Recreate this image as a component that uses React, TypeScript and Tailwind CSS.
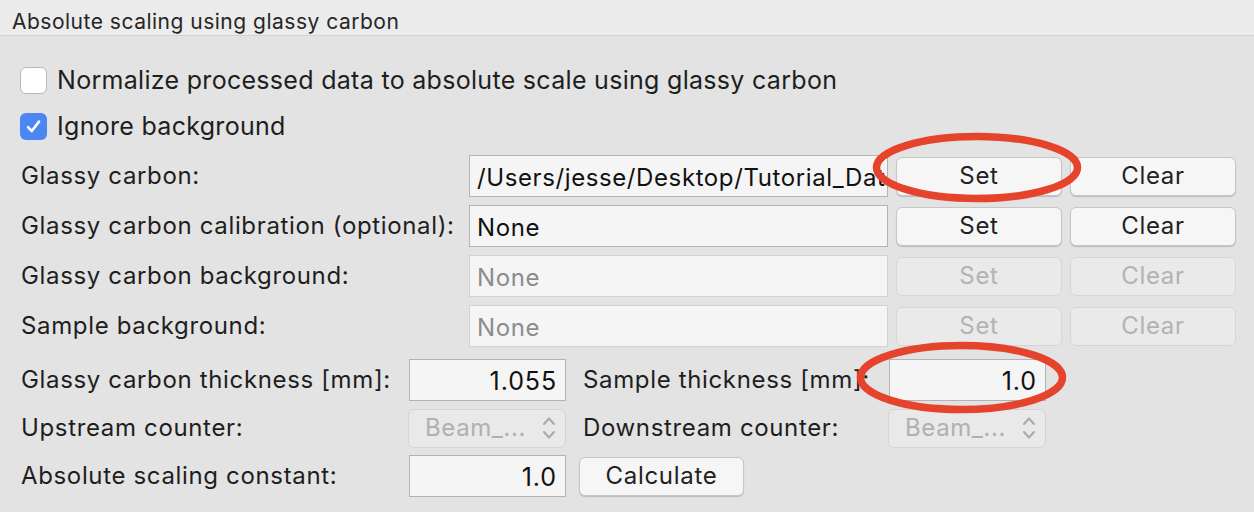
import React from 'react';

function Checkbox({ checked }: { checked?: boolean }) {
  if (checked) {
    return (
      <div className="w-[27px] h-[27px] rounded-[6px] bg-[#4c86f2] flex items-center justify-center shrink-0">
        <svg width="17" height="17" viewBox="0 0 17 17">
          <path d="M3 9.2 L6.8 13 L14 3.6" fill="none" stroke="#fff" strokeWidth="2.6" strokeLinecap="round" strokeLinejoin="round" />
        </svg>
      </div>
    );
  }
  return <div className="w-[27px] h-[27px] rounded-[6px] bg-white border border-[#b9b9b9] shrink-0" />;
}

function TextBox({ value, disabled, right }: { value: string; disabled?: boolean; right?: boolean }) {
  return (
    <div
      className={`h-[42px] w-full border bg-[#f5f5f5] flex items-center overflow-hidden whitespace-nowrap pt-[4px] ${
        right ? 'justify-end pr-[8px] text-[25px] tracking-[0.9px]' : 'pl-[7px] text-[24px] tracking-[0.6px]'
      } ${disabled ? 'border-[#d2d2d2] text-[#8c8c8c]' : 'border-[#b3b3b3] text-[#111]'}`}
    >
      {value}
    </div>
  );
}

function Btn({ label, disabled }: { label: string; disabled?: boolean }) {
  return (
    <div
      className={`h-[39px] w-full rounded-[6px] border flex items-center justify-center text-[24px] tracking-[0.7px] ${
        disabled
          ? 'bg-[#eaeaea] border-[#d6d6d6] text-[#b3b3b3]'
          : 'bg-[#f6f6f6] border-[#c6c6c6] text-[#222] shadow-[0_1px_1px_rgba(0,0,0,0.18)]'
      }`}
    >
      {label}
    </div>
  );
}

function Combo() {
  return (
    <div className="h-[39px] w-[158px] -ml-[1px] rounded-[6px] border border-[#d4d4d4] bg-[#e9e9e9] flex items-center justify-between pl-[16px] pr-[9px] text-[24px] tracking-[0.6px] text-[#b0b0b0]">
      <span>Beam_...</span>
      <svg width="14" height="26" viewBox="0 0 14 26">
        <path d="M2 9 L7 3.5 L12 9 M2 17 L7 22.5 L12 17" fill="none" stroke="#a9a9a9" strokeWidth="2" strokeLinecap="round" strokeLinejoin="round" />
      </svg>
    </div>
  );
}

const files = [
  { label: 'Glassy carbon:', value: '/Users/jesse/Desktop/Tutorial_Data/glassy_carbon.dat', disabled: false },
  { label: 'Glassy carbon calibration (optional):', value: 'None', disabled: false },
  { label: 'Glassy carbon background:', value: 'None', disabled: true },
  { label: 'Sample background:', value: 'None', disabled: true },
];

export default function App() {
  return (
    <div
      className="relative w-[1254px] h-[512px] overflow-hidden bg-[#e3e3e3] text-[#1e1e1e]"
      style={{ fontFamily: 'Inter, "Noto Sans", sans-serif' }}
    >
      <div className="h-[36px] bg-[#ececec] border-b border-[#d2d2d2] pl-[12px] pt-[9px] text-[21px] leading-[25px] tracking-[0.5px] text-[#262626]">
        Absolute scaling using glassy carbon
      </div>

      <div className="pl-[20px] pt-[20px]">
        <div className="h-[46px] flex items-center gap-[10px] text-[25px] tracking-[0.3px] pt-[3px]">
          <Checkbox />
          <span>Normalize processed data to absolute scale using glassy carbon</span>
        </div>
        <div className="h-[46px] flex items-center gap-[10px] text-[25px] tracking-[0.3px] pt-[3px]">
          <Checkbox checked />
          <span>Ignore background</span>
        </div>

        <div className="mt-[7px] grid grid-cols-[441px_419px_166px_166px] auto-rows-[42px] gap-x-[8px] gap-y-[8px] items-center text-[24px] tracking-[0.65px]">
          {files.map((f) => (
            <React.Fragment key={f.label}>
              <span className="pl-[1px] whitespace-nowrap">{f.label}</span>
              <TextBox value={f.value} disabled={f.disabled} />
              <Btn label="Set" disabled={f.disabled} />
              <Btn label="Clear" disabled={f.disabled} />
            </React.Fragment>
          ))}
        </div>

        <div className="mt-[12px] grid grid-cols-[381px_157px_307px_157px] auto-rows-[42px] gap-x-[8px] gap-y-[6px] items-center text-[24px] tracking-[0.65px]">
          <span className="pl-[1px] whitespace-nowrap">Glassy carbon thickness [mm]:</span>
          <TextBox value="1.055" right />
          <span className="pl-[9px] whitespace-nowrap">Sample thickness [mm]:</span>
          <TextBox value="1.0" right />

          <span className="pl-[1px]">Upstream counter:</span>
          <Combo />
          <span className="pl-[9px]">Downstream counter:</span>
          <Combo />

          <span className="pl-[1px]">Absolute scaling constant:</span>
          <TextBox value="1.0" right />
          <div className="pl-[5px] w-[170px]">
            <Btn label="Calculate" />
          </div>
          <div />
        </div>
      </div>

      <svg className="absolute inset-0 pointer-events-none" width="1254" height="512" viewBox="0 0 1254 512">
        <ellipse cx="977" cy="167.5" rx="100.5" ry="31" fill="none" stroke="#e5432b" strokeWidth="7.5" />
        <ellipse cx="961.5" cy="377.5" rx="101" ry="32" fill="none" stroke="#e5432b" strokeWidth="7.5" />
      </svg>
    </div>
  );
}
